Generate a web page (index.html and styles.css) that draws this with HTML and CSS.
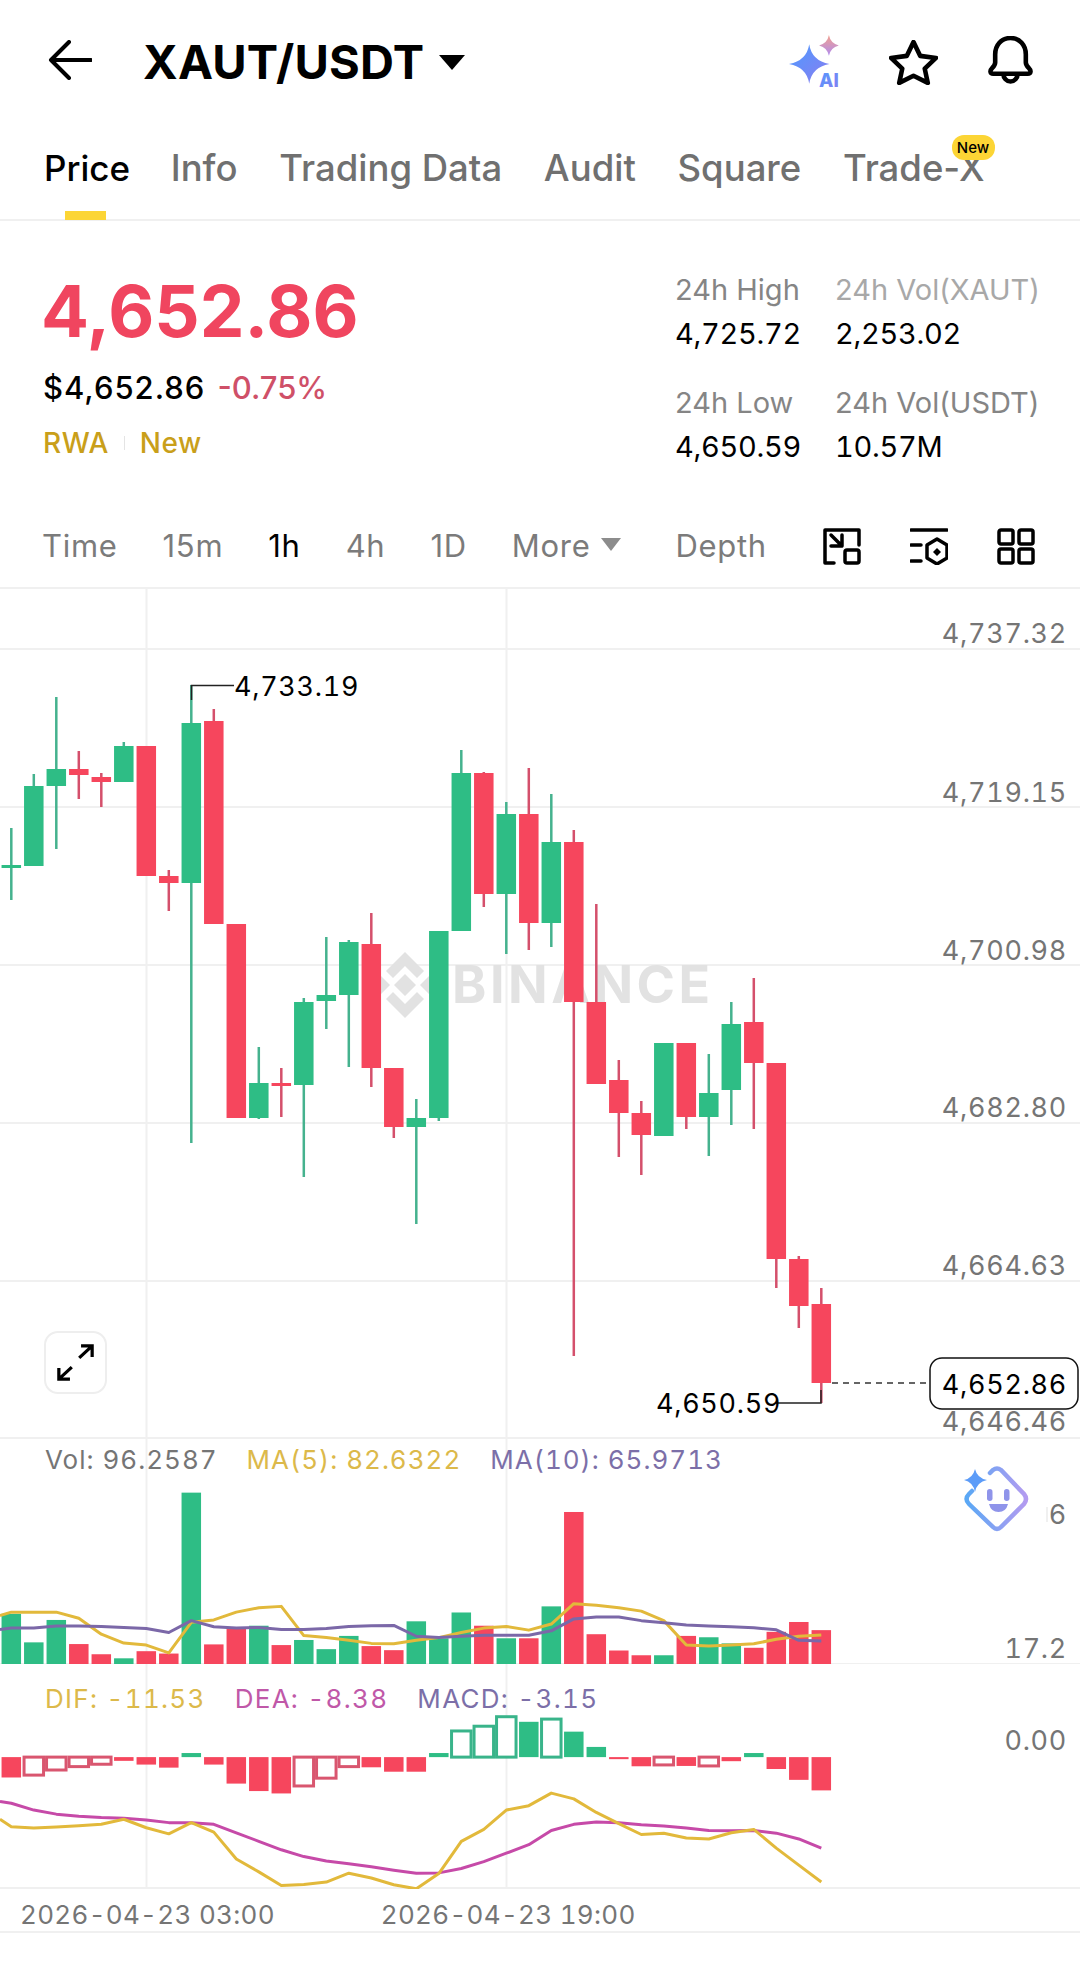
FILE: index.html
```html
<!DOCTYPE html>
<html lang="en">
<head>
  <meta charset="UTF-8">
  <meta name="viewport" content="width=device-width, initial-scale=1.0">
  <title>XAUT/USDT</title>
  <link rel="stylesheet" href="styles.css">
</head>
<body>
  <div class="page">

    <!-- top bar -->
    <header class="topbar">
      <svg class="icon-back" viewBox="0 0 44 40"><path d="M43 20H3M21 2L3 20l18 18"/></svg>
      <h1 class="pair">XAUT/USDT</h1>
      <span class="pair-caret"></span>
      <div class="top-actions">
        <svg class="icon-ai" viewBox="0 0 54 52">
          <defs>
            <linearGradient id="aiBig" x1="0" y1="0" x2="1" y2="1"><stop offset="0" stop-color="#4e9bff"/><stop offset="1" stop-color="#8a7cf0"/></linearGradient>
            <linearGradient id="aiSmall" x1="0" y1="0" x2="0" y2="1"><stop offset="0" stop-color="#f2a08e"/><stop offset="1" stop-color="#b08cf0"/></linearGradient>
          </defs>
          <path fill="url(#aiBig)" d="M19.500 9Q22 25 39 28Q22 31 19.500 47Q17 31 0 28Q17 25 19.500 9z"/>
          <path fill="url(#aiSmall)" d="M38.500 0Q40 8 48 10Q40 12 38.500 20Q37 12 29 10Q37 8 38.500 0z"/>
          <text class="ai-text" x="29" y="50" fill="url(#aiBig)">AI</text>
        </svg>
        <svg class="icon-star" viewBox="0 0 48 44"><path d="M24 2l6.500 13.500L46 17.500 35 28l3 14-14-7-14 7 3-14L2 17.500l15.500-2z"/></svg>
        <svg class="icon-bell" viewBox="0 0 44 47"><path d="M22 2C13 2 7 9 7 18v8c0 2-1 3.500-3 5.500-2.500 2.500-2 5.500 1 5.500h34c3 0 3.500-3 1-5.500-2-2-3-3.500-3-5.500v-8C37 9 31 2 22 2z"/><path d="M15 37a7 7.500 0 0 0 14 0"/></svg>
      </div>
    </header>

    <!-- tabs -->
    <nav class="tabs">
      <span class="tab tab-active">Price</span>
      <span class="tab">Info</span>
      <span class="tab">Trading Data</span>
      <span class="tab">Audit</span>
      <span class="tab">Square</span>
      <span class="tab">Trade-X<span class="tab-badge">New</span></span>
    </nav>

    <!-- price summary -->
    <section class="summary">
      <div class="summary-left">
        <div class="last-price">4,652.86</div>
        <div class="fiat-row"><span class="fiat">$4,652.86</span><span class="change">-0.75%</span></div>
        <div class="tag-row"><span>RWA</span><i class="tag-sep"></i><span>New</span></div>
      </div>
      <div class="stats">
        <div class="stat"><span class="stat-label">24h High</span><span class="stat-value">4,725.72</span></div>
        <div class="stat"><span class="stat-label stat-label-light">24h Vol(XAUT)</span><span class="stat-value">2,253.02</span></div>
        <div class="stat"><span class="stat-label">24h Low</span><span class="stat-value">4,650.59</span></div>
        <div class="stat"><span class="stat-label">24h Vol(USDT)</span><span class="stat-value">10.57M</span></div>
      </div>
    </section>

    <!-- interval toolbar -->
    <div class="toolbar">
      <span class="interval">Time</span>
      <span class="interval">15m</span>
      <span class="interval interval-active">1h</span>
      <span class="interval">4h</span>
      <span class="interval">1D</span>
      <span class="interval interval-more">More<i class="more-caret"></i></span>
      <span class="interval interval-depth">Depth</span>
      <div class="tool-icons">
        <svg class="tool-icon" viewBox="0 0 38 37"><path d="M11 35H2V2h34v15"/><path d="M8 7l11 11M8 18h11V7"/><rect x="22" y="22" width="14" height="13" rx="2"/></svg>
        <svg class="tool-icon" viewBox="0 0 38 37"><path d="M1 2h36M1 17h10M1 33h10"/><path d="M27 11l10 6v13l-10 6-10-6V17z"/><path class="tool-fill" d="M27 20l4 4-4 4-4-4z"/></svg>
        <svg class="tool-icon" viewBox="0 0 38 37"><rect x="2" y="2" width="14" height="14" rx="2"/><rect x="22" y="2" width="14" height="14" rx="2"/><rect x="2" y="21" width="14" height="14" rx="2"/><rect x="22" y="21" width="14" height="14" rx="2"/></svg>
      </div>
    </div>

    <!-- candle pane -->
    <div class="pane pane-main">
      <svg id="main-chart" class="pane-svg" viewBox="0 587 1080 852"></svg>
      <button class="expand-btn">
        <svg viewBox="0 0 40 40"><path d="M24 15L38 2M26 2h12v12M16 25L2 38M14 38H2V26"/></svg>
      </button>
    </div>

    <!-- volume pane -->
    <div class="pane pane-vol">
      <svg id="vol-chart" class="pane-svg" viewBox="0 1439 1080 225"></svg>
      <div class="legend legend-vol">
        <span class="lg-gray">Vol: 96.2587</span>
        <span class="lg-yellow">MA(5): 82.6322</span>
        <span class="lg-purple">MA(10): 65.9713</span>
      </div>
      <svg class="ai-face" viewBox="-3 -3 70 70">
        <defs>
          <linearGradient id="faceRing" x1="0" y1="0.5" x2="1" y2="0.5"><stop offset="0" stop-color="#5aa8f5"/><stop offset="1" stop-color="#b39bf0"/></linearGradient>
        </defs>
        <path class="face-ring" d="M26 5l3-3q4-3 8 0l23 24q4 5 0 10L37 59q-4 4-8 0L5 36q-5-5 0-10l3-3"/>
        <path class="face-spark" d="M11 1Q13 10 23 12Q13 14 11 24Q9 14 0 12Q9 10 11 1z"/>
        <rect class="face-part" x="23" y="21" width="5.500" height="12" rx="2.700"/>
        <rect class="face-part" x="40" y="21" width="5.500" height="12" rx="2.700"/>
        <path class="face-part" d="M25 36h19q-2 8-9.500 8T25 36z"/>
      </svg>
    </div>

    <!-- macd pane -->
    <div class="pane pane-macd">
      <svg id="macd-chart" class="pane-svg" viewBox="0 1664 1080 225"></svg>
      <div class="legend legend-macd">
        <span class="lg-yellow">DIF: -11.53</span>
        <span class="lg-pink">DEA: -8.38</span>
        <span class="lg-purple">MACD: -3.15</span>
      </div>
    </div>

    <!-- time axis -->
    <div class="time-axis">
      <span>2026-04-23 03:00</span>
      <span>2026-04-23 19:00</span>
    </div>
  </div>

  <script src="chart.js"></script>
</body>
</html>
```

FILE: styles.css
```css
body {
  margin: 0;
  background-color: #ffffff;
  font-family: "Inter", "Liberation Sans", sans-serif;
  color: #000000;
}

.page {
  width: 1080px;
  height: 1963px;
  overflow: hidden;
}

/* top bar */
.topbar {
  display: flex;
  align-items: center;
  height: 120px;
  box-sizing: border-box;
  padding-left: 48px;
}

.icon-back {
  width: 44px;
  height: 40px;
  fill: none;
  stroke: #000000;
  stroke-width: 4;
  stroke-linecap: round;
  stroke-linejoin: round;
}

.pair {
  margin: 4px 0 0 51px;
  font-size: 47px;
  font-weight: 700;
  line-height: 56px;
  letter-spacing: 0.2px;
}

.pair-caret {
  margin-left: 15px;
  margin-top: 5px;
  border-left: 13px solid transparent;
  border-right: 13px solid transparent;
  border-top: 15px solid #000000;
}

.top-actions {
  display: flex;
  align-items: center;
  margin-left: auto;
  padding: 4px 47px 0 0;
}

.icon-ai {
  width: 56px;
  height: 54px;
  margin-right: 44px;
  overflow: visible;
}

.ai-text {
  font-size: 18px;
  font-weight: 800;
}

.icon-star {
  width: 49px;
  height: 45px;
  margin-right: 50px;
  fill: none;
  stroke: #000000;
  stroke-width: 4.5;
  stroke-linejoin: round;
}

.icon-bell {
  width: 45px;
  height: 48px;
  margin-top: -4px;
  fill: none;
  stroke: #000000;
  stroke-width: 4.500;
  stroke-linejoin: round;
}

/* tabs */
.tabs {
  display: flex;
  gap: 41.700px;
  height: 101px;
  box-sizing: border-box;
  padding: 26px 0 0 44px;
  border-bottom: 2px solid #f0f0f0;
}

.tab {
  position: relative;
  font-size: 36.500px;
  font-weight: 500;
  line-height: 44px;
  color: #707070;
}

.tab-active {
  font-size: 35px;
  margin-right: -1px;
  color: #000000;
}

.tab-active::after {
  content: "";
  position: absolute;
  left: 21px;
  top: 65px;
  width: 41px;
  height: 9px;
  background-color: #fcd535;
}

.tab-badge {
  position: absolute;
  top: -11px;
  right: -10px;
  width: 43px;
  height: 25px;
  border-radius: 12px;
  background-color: #fcd535;
  color: #000000;
  font-size: 15px;
  font-weight: 500;
  line-height: 25px;
  text-align: center;
}

/* price summary */
.summary {
  display: flex;
  height: 279px;
}

.summary-left {
  width: 675px;
  box-sizing: border-box;
  padding: 50px 0 0 41px;
}

.last-price {
  font-size: 71px;
  font-weight: 700;
  line-height: 80px;
  color: #f0455f;
}

.fiat-row {
  display: flex;
  gap: 12px;
  margin: 17px 0 0 2px;
  font-size: 31px;
  line-height: 40px;
}

.fiat {
  font-weight: 500;
  letter-spacing: 1px;
}

.change {
  color: #cf5068;
  font-weight: 500;
}

.tag-row {
  display: flex;
  align-items: center;
  margin: 17px 0 0 2px;
  font-size: 28px;
  font-weight: 500;
  line-height: 36px;
  letter-spacing: 0.5px;
  color: #c99f1a;
}

.tag-sep {
  width: 1px;
  height: 14px;
  margin: 0 15px;
  background-color: #e4e4e4;
}

.stats {
  display: grid;
  grid-template-columns: 160px auto;
  grid-auto-rows: 84px;
  row-gap: 29px;
  padding-top: 49px;
}

.stat {
  display: flex;
  flex-direction: column;
  gap: 4px;
  line-height: 40px;
}

.stat-label {
  font-size: 29px;
  color: #858585;
}

.stat-label-light {
  color: #a8a8a8;
}

.stat-value {
  font-size: 29px;
  letter-spacing: -0.3px;
  font-variant-numeric: tabular-nums;
  color: #000000;
}

/* interval toolbar */
.toolbar {
  display: flex;
  align-items: center;
  gap: 45px;
  height: 87px;
  box-sizing: border-box;
  padding: 5px 0 0 42px;
}

.interval {
  font-size: 31px;
  line-height: 40px;
  letter-spacing: 0.7px;
  color: #7b7b7b;
}

.interval-active {
  color: #000000;
}

.interval-more {
  display: flex;
  align-items: center;
  gap: 11px;
}

.more-caret {
  margin-top: -3px;
  border-left: 10px solid transparent;
  border-right: 10px solid transparent;
  border-top: 13px solid #8c8c8c;
}

.interval-depth {
  margin-left: 9px;
}

.tool-icons {
  display: flex;
  gap: 49px;
  margin-left: auto;
  padding-right: 45px;
}

.tool-icon {
  width: 38px;
  height: 37px;
  fill: none;
  stroke: #000000;
  stroke-width: 3.500;
  stroke-linecap: round;
  stroke-linejoin: round;
}

.tool-fill {
  fill: #000000;
  stroke: none;
}

/* chart panes */
.pane {
  position: relative;
}

.pane-main {
  height: 852px;
}

.pane-vol,
.pane-macd {
  height: 225px;
}

.pane-svg {
  display: block;
  width: 1080px;
  height: 100%;
}

.grid-line {
  stroke: #f0f0f0;
  stroke-width: 2;
}

.axis-label,
.extreme-label,
.last-label {
  font-size: 27px;
  letter-spacing: 0.700px;
  font-variant-numeric: tabular-nums;
}

.axis-label {
  fill: #757575;
  text-anchor: end;
}

.extreme-label {
  fill: #000000;
}

.extreme-line {
  fill: none;
  stroke: #222222;
  stroke-width: 1.500;
}

.last-line {
  stroke: #333333;
  stroke-width: 1.500;
  stroke-dasharray: 6 5;
}

.last-box {
  fill: #ffffff;
  stroke: #111111;
  stroke-width: 1.500;
}

.last-label {
  fill: #000000;
  text-anchor: end;
}

.watermark-text {
  font-size: 52px;
  font-weight: 700;
  letter-spacing: 3.500px;
  fill: #e2e2e2;
}

.watermark-logo {
  fill: #e2e2e2;
}

.up {
  fill: #2ebd85;
}

.down {
  fill: #f6465d;
}

.wick-up {
  fill: #45b28e;
}

.wick-down {
  fill: #d4506c;
}

.hollow-up {
  fill: #ffffff;
  stroke: #39b48a;
  stroke-width: 3;
}

.hollow-down {
  fill: #ffffff;
  stroke: #d9566f;
  stroke-width: 3;
}

.line-yellow,
.line-purple,
.line-pink {
  fill: none;
  stroke-width: 3;
  stroke-linejoin: round;
}

.line-yellow {
  stroke: #e2b93b;
}

.line-purple {
  stroke: #7b68a8;
}

.line-pink {
  stroke: #c64aa8;
}

.expand-btn {
  position: absolute;
  left: 44px;
  top: 744px;
  width: 63px;
  height: 63px;
  padding: 11px;
  box-sizing: border-box;
  border: 2px solid #eeeeee;
  border-radius: 14px;
  background-color: #ffffff;
}

.expand-btn svg {
  display: block;
  width: 100%;
  height: 100%;
  fill: none;
  stroke: #000000;
  stroke-width: 3.500;
  stroke-linejoin: miter;
}

.legend {
  position: absolute;
  left: 45px;
  display: flex;
  gap: 29px;
  font-size: 26px;
  line-height: 36px;
  letter-spacing: 1px;
  font-variant-numeric: tabular-nums;
}

.legend-vol {
  top: 3px;
}

.legend-macd {
  top: 17px;
  letter-spacing: 1.300px;
}

.lg-gray {
  color: #757575;
}

.lg-yellow {
  color: #dcb94a;
}

.lg-purple {
  color: #7c6fa8;
}

.lg-pink {
  color: #c058a8;
}

.ai-face {
  position: absolute;
  left: 961px;
  top: 26px;
  width: 70px;
  height: 70px;
  background-color: #ffffff;
}

.face-ring {
  fill: none;
  stroke: url(#faceRing);
  stroke-width: 4.500;
  stroke-linecap: round;
}

.face-spark {
  fill: #5c9cf8;
}

.face-part {
  fill: #8f94ea;
}

/* time axis */
.time-axis {
  display: flex;
  gap: 106px;
  height: 44px;
  box-sizing: border-box;
  padding-left: 20px;
  border-bottom: 2px solid #f0f0f0;
  font-size: 26px;
  line-height: 52px;
  letter-spacing: 0.300px;
  font-variant-numeric: tabular-nums;
  color: #757575;
}
```

FILE: chart.js
```js
const SVG_NS = "http://www.w3.org/2000/svg";
const STEP = 22.5;
const BODY = 19.5;

function cx(i) {
  return 11.3 + STEP * i;
}

function add(svg, tag, attrs, text) {
  const el = document.createElementNS(SVG_NS, tag);
  for (const k in attrs) el.setAttribute(k, attrs[k]);
  if (text) el.textContent = text;
  svg.appendChild(el);
  return el;
}

function hLine(svg, y) {
  add(svg, "line", { x1: 0, x2: 1080, y1: y, y2: y, class: "grid-line" });
}

function vLines(svg, y1, y2) {
  add(svg, "line", { x1: 146.5, x2: 146.5, y1, y2, class: "grid-line" });
  add(svg, "line", { x1: 506.5, x2: 506.5, y1, y2, class: "grid-line" });
}

function axisText(svg, y, text) {
  add(svg, "text", { x: 1067, y: y + 9.500, class: "axis-label" }, text);
}

// top, bottom, wick top, wick bottom, 1 = up / 0 = down
const candles = [
  [865, 868, 828, 900, 1], [786, 866, 774, 866, 1], [769, 786, 697, 849, 1],
  [769, 775, 751, 799, 0], [777, 782, 773, 807, 0], [746, 782, 742, 782, 1],
  [746, 876, 746, 876, 0], [876, 883, 870, 911, 0], [723, 883, 685, 1143, 1],
  [721, 924, 709, 924, 0], [924, 1118, 924, 1118, 0], [1083, 1118, 1047, 1119, 1],
  [1083, 1086, 1068, 1117, 0], [1002, 1085, 998, 1177, 1], [995, 1001, 937, 1029, 1],
  [942, 995, 940, 1067, 1], [944, 1068, 913, 1087, 0], [1068, 1127, 1068, 1138, 0],
  [1118, 1127, 1099, 1224, 1], [931, 1118, 931, 1121, 1], [773, 931, 750, 931, 1],
  [773, 894, 772, 907, 0], [814, 894, 802, 954, 1], [814, 923, 768, 950, 0],
  [842, 923, 794, 947, 1], [842, 1002, 830, 1356, 0], [1002, 1084, 904, 1084, 0],
  [1080, 1113, 1060, 1157, 0], [1113, 1135, 1101, 1175, 0], [1043, 1136, 1043, 1136, 1],
  [1043, 1117, 1043, 1129, 0], [1093, 1117, 1054, 1156, 1], [1024, 1090, 1002, 1125, 1],
  [1022, 1063, 978, 1129, 0], [1063, 1259, 1063, 1288, 0], [1259, 1306, 1256, 1328, 0],
  [1304, 1383, 1288, 1403, 0],
];

// sub panes were read off in one scale, toY maps it back to page pixels
function toY(z) {
  return 1439 + (z - 25) * 0.3395;
}

const volumes = [540, 624, 558, 629, 659, 671, 650, 657, 183, 630, 580, 575, 632, 617, 644, 605, 635, 647, 562, 612, 536, 575, 612, 612, 518, 240, 600, 648, 662, 662, 605, 609, 627, 640, 593, 564, 588];
const ma5 = [535, 535, 535, 553, 600, 626, 632, 655, 565, 558, 535, 522, 518, 604, 610, 618, 627, 628, 618, 610, 595, 582, 577, 588, 570, 510, 515, 522, 532, 560, 632, 635, 632, 628, 615, 606, 602];
const ma10 = [582, 582, 576, 576, 577, 580, 583, 595, 560, 578, 582, 580, 586, 586, 583, 577, 575, 574, 606, 610, 606, 603, 603, 603, 590, 555, 549, 549, 560, 566, 573, 576, 578, 581, 587, 618, 620];

// value end of each macd bar and whether it is hollow
const macd = [
  [1022, 0], [1015, 1], [1000, 1], [990, 1], [983, 1], [973, 0], [984, 0], [993, 0], [950, 0],
  [984, 0], [1040, 0], [1062, 0], [1069, 0], [1047, 1], [1024, 1], [990, 1], [992, 0], [1005, 0],
  [1005, 0], [950, 0], [885, 1], [871, 1], [843, 1], [858, 0], [850, 1], [887, 0], [932, 0],
  [968, 0], [989, 0], [985, 1], [988, 0], [988, 1], [974, 0], [950, 0], [997, 0], [1029, 0], [1060, 0],
];
const dea = [1098, 1118, 1130, 1136, 1140, 1142, 1147, 1155, 1155, 1160, 1185, 1210, 1235, 1255, 1268, 1276, 1285, 1295, 1304, 1303, 1290, 1270, 1245, 1220, 1178, 1160, 1153, 1155, 1161, 1165, 1171, 1178, 1179, 1178, 1186, 1203, 1230];
const dif = [1167, 1171, 1168, 1164, 1160, 1145, 1170, 1188, 1155, 1183, 1262, 1300, 1340, 1337, 1330, 1304, 1318, 1338, 1350, 1305, 1210, 1175, 1118, 1105, 1068, 1085, 1125, 1158, 1190, 1186, 1200, 1203, 1185, 1175, 1230, 1280, 1330];

function polyline(svg, values, cls, start) {
  let pts = "0," + toY(start) + " ";
  values.forEach((v, i) => {
    pts += cx(i) + "," + toY(v) + " ";
  });
  add(svg, "polyline", { points: pts, class: cls });
}

function drawMain() {
  const svg = document.getElementById("main-chart");
  hLine(svg, 588);
  [649, 807, 965, 1123, 1281, 1438].forEach((y) => hLine(svg, y));
  vLines(svg, 588, 1439);

  // watermark sits under the candles
  add(svg, "path", {
    class: "watermark-logo",
    d: "M405 952l19 19-7 7-12-12-12 12-7-7zM372 985l9-9 9 9-9 9zM438 985l-9-9-9 9 9 9zM405 974l11 11-11 11-11-11zM405 1018l19-19-7-7-12 12-12-12-7 7z",
  });
  add(svg, "text", { x: 452, y: 1003, class: "watermark-text" }, "BINANCE");

  candles.forEach((c, i) => {
    const dir = c[4] ? "up" : "down";
    add(svg, "rect", { x: cx(i) - 1.25, y: c[2], width: 2.5, height: c[3] - c[2], class: "wick-" + dir });
    add(svg, "rect", { x: cx(i) - BODY / 2, y: c[0], width: BODY, height: c[1] - c[0], class: dir });
  });

  [[633, "4,737.32"], [792, "4,719.15"], [950, "4,700.98"], [1107, "4,682.80"], [1265, "4,664.63"], [1421, "4,646.46"]]
    .forEach((l) => axisText(svg, l[0], l[1]));

  // high / low markers
  add(svg, "path", { d: "M191.500 700V685.500H234", class: "extreme-line" });
  add(svg, "text", { x: 234, y: 696, class: "extreme-label" }, "4,733.19");
  add(svg, "path", { d: "M821 1390V1403H778", class: "extreme-line" });
  add(svg, "text", { x: 656, y: 1413, class: "extreme-label" }, "4,650.59");

  // last price tag
  add(svg, "line", { x1: 832, x2: 930, y1: 1383, y2: 1383, class: "last-line" });
  add(svg, "rect", { x: 930, y: 1358, width: 148, height: 51, rx: 12, class: "last-box" });
  add(svg, "text", { x: 1067, y: 1394, class: "last-label" }, "4,652.86");
}

function drawVol() {
  const svg = document.getElementById("vol-chart");
  hLine(svg, 1664);
  vLines(svg, 1439, 1664);
  volumes.forEach((v, i) => {
    const y = toY(v);
    add(svg, "rect", { x: cx(i) - BODY / 2, y, width: BODY, height: 1664 - y, class: candles[i][4] ? "up" : "down" });
  });
  polyline(svg, ma5, "line-yellow", 545);
  polyline(svg, ma10, "line-purple", 586);
  add(svg, "line", { x1: 1047, x2: 1047, y1: 1507, y2: 1522, class: "grid-line" });
  axisText(svg, 1514, "6");
  axisText(svg, 1648, "17.2");
}

function drawMacd() {
  const svg = document.getElementById("macd-chart");
  hLine(svg, 1888);
  vLines(svg, 1664, 1888);
  const zero = toY(962);
  macd.forEach((m, i) => {
    const y = toY(m[0]);
    const up = y < zero;
    const top = Math.min(y, zero);
    const h = Math.abs(y - zero);
    const cls = m[1] ? (up ? "hollow-up" : "hollow-down") : (up ? "up" : "down");
    add(svg, "rect", { x: cx(i) - BODY / 2, y: top, width: BODY, height: h, class: cls });
  });
  polyline(svg, dea, "line-pink", 1093);
  polyline(svg, dif, "line-yellow", 1145);
  axisText(svg, 1740, "0.00");
}

drawMain();
drawVol();
drawMacd();
```
